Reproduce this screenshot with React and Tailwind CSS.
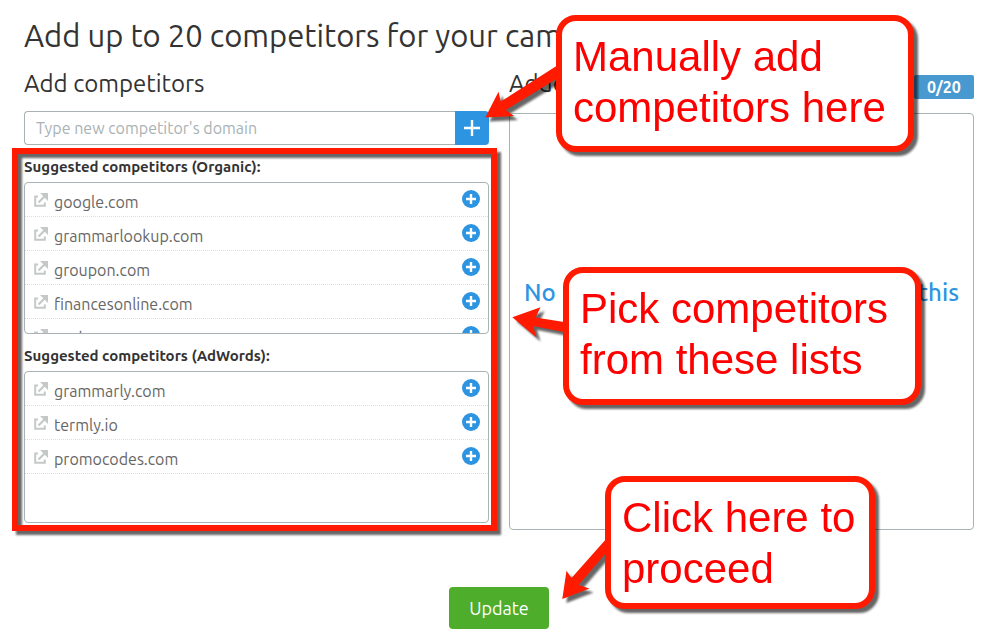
import React from 'react';
import classNames from 'clsx';

const organic = ['google.com', 'grammarlookup.com', 'groupon.com', 'financesonline.com', 'seek.com'];
const adwords = ['grammarly.com', 'termly.io', 'promocodes.com'];

const ExternalIcon = () => (
	<svg viewBox="0 0 14 14" className="size-[14px] shrink-0" fill="none" stroke="#c4c9c8" strokeWidth="2" aria-hidden="true">
		<path d="M4 3.5H1.2V12.8H10.8V9.5" />
		<path d="M4.5 9.5L11.5 2.5" strokeWidth="2.2" />
		<path d="M6 0H14V8L11.2 5.2L8.8 2.8Z" fill="#c4c9c8" stroke="none" />
	</svg>
);

const AddIcon = () => (
	<svg viewBox="0 0 18 18" className="block size-[18px]" aria-hidden="true">
		<circle cx="9" cy="9" r="9" fill="#2d94e1" />
		<path d="M9 4V14M4 9H14" stroke="#fff" strokeWidth="2.4" />
	</svg>
);

const Suggestions = ({ title, domains }) => (
	<section>
		<h3 className="mb-[3px] text-[15px] leading-6 font-semibold text-[#333]">{title}</h3>
		<ul className="h-[152px] overflow-hidden rounded-[4px] border border-[#a9b2b4]">
			{domains.map(domain => (
				<li key={domain} className="flex h-[34px] items-center justify-between border-b border-dotted border-[#dcdfdf] pr-2 pl-[9px]">
					<a href={`http://${domain}`} className="flex items-center gap-[6px]">
						<ExternalIcon />
						<span className="pt-1 text-base leading-6 text-[#666]">{domain}</span>
					</a>
					<button type="button" aria-label={`Add ${domain}`} className="pb-[2px]">
						<AddIcon />
					</button>
				</li>
			))}
		</ul>
	</section>
);

const Callout = ({ className, children }) => (
	<div className={classNames('absolute rounded-[20px] border-[6px] border-[#ff1a00] bg-white px-[11px] py-[10px]', className)}>
		<p className="font-['Liberation_Sans',Arial,sans-serif] text-[42px] leading-[51px] text-[#ff0000]">{children}</p>
	</div>
);

// Red notes drawn over the form
const Notes = () => (
	<div className="pointer-events-none absolute top-0 left-0 drop-shadow-[4px_4px_1px_rgba(0,0,0,0.6)]">
		<svg width="1000" height="643" viewBox="0 0 1000 643" className="max-w-none" fill="#ff1a00" aria-hidden="true">
			<path d="M485.300 117.500L498.500 91.700L500.800 101.500L558 65V78L505.700 110L514 116Z" />
			<path d="M512.300 317.300L540.500 307.200L535.500 317.500L564 322V332L533 326L536.500 337.500Z" />
			<path d="M562.300 599L566.500 570.700L571.500 578L607 538V552L578.500 585L589.500 588.500Z" />
		</svg>
		<Callout className="top-[15px] left-[556px] h-[137px] w-[358px]">Manually add competitors here</Callout>
		<Callout className="top-[267px] left-[563px] h-[138px] w-[358px]">Pick competitors from these lists</Callout>
		<Callout className="top-[476px] left-[605px] h-[133px] w-[270px]">Click here to proceed</Callout>
	</div>
);

export default function App() {
	return (
		<main className="relative min-h-screen overflow-hidden bg-white pt-4 pr-[26px] pb-[14px] pl-6 font-[Ubuntu,'Noto_Sans',sans-serif] text-[#333]">
			<h1 className="text-[31px] leading-10 whitespace-nowrap">Add up to 20 competitors for your campaign</h1>

			<div className="mt-3 grid grid-cols-2 gap-5">
				<div className="pb-[7px]">
					<h2 className="mb-[11px] text-2xl leading-8">Add competitors</h2>
					<form className="flex h-[34px]">
						<input
							type="text"
							aria-label="Competitor's domain"
							placeholder="Type new competitor's domain"
							className="min-w-0 flex-1 rounded-l-[4px] border border-r-0 border-[#a9b2b4] px-[11px] text-base placeholder:text-[#a9b2b4]"
						/>
						<button type="button" aria-label="Add competitor" className="flex w-[34px] items-center justify-center rounded-r-[4px] bg-[#2d94e1]">
							<svg viewBox="0 0 16 16" className="size-4" stroke="#fff" strokeWidth="2.4" aria-hidden="true">
								<path d="M8 0V16M0 8H16" />
							</svg>
						</button>
					</form>

					<div className="relative mt-[10px] flex flex-col gap-[10px]">
						<Suggestions title="Suggested competitors (Organic):" domains={organic} />
						<Suggestions title="Suggested competitors (AdWords):" domains={adwords} />
						<div className="pointer-events-none absolute -top-[7px] -right-2 -bottom-2 -left-3 border-[6px] border-[#ff1a00] drop-shadow-[4px_4px_1px_rgba(0,0,0,0.6)]" />
					</div>
				</div>

				<div className="flex flex-col">
					<div className="mb-[13px] flex h-8 items-center justify-between">
						<h2 className="text-2xl leading-8">Added</h2>
						<span className="mt-[6px] w-[60px] rounded-[2px] bg-[#4799d0] text-center text-base leading-6 font-semibold text-white">0/20</span>
					</div>
					<div className="flex flex-1 items-start justify-between rounded-[4px] border border-[#a9b2b4] px-[14px] pt-[163px] text-2xl leading-8 font-medium text-[#2d94e1]">
						<span>No</span>
						<span>this</span>
					</div>
				</div>
			</div>

			<div className="mt-[57px] flex justify-center">
				<button type="button" className="h-[42px] w-[100px] rounded-[4px] bg-[#4eae2b] text-lg text-white">Update</button>
			</div>

			<Notes />
		</main>
	);
}
